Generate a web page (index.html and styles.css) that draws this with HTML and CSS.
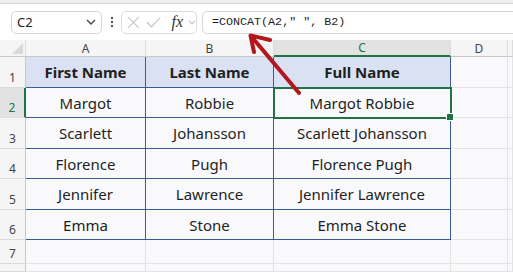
FILE: index.html
```html
<!DOCTYPE html>
<html lang="en">
<head>
  <meta charset="UTF-8">
  <title>CONCAT example</title>
  <link rel="stylesheet" href="styles.css">
</head>
<body>
  <div class="ribbon-edge"></div>

  <div class="formula-bar">
    <div class="name-box">
      <span>C2</span>
      <svg width="10" height="6" viewBox="0 0 10 6"><path d="M1 1 L5 5 L9 1" class="chev" /></svg>
    </div>
    <svg class="dots" width="4" height="12" viewBox="0 0 4 12">
      <circle cx="2" cy="2" r="1.2" /><circle cx="2" cy="6" r="1.2" /><circle cx="2" cy="10" r="1.2" />
    </svg>
    <div class="fx-box">
      <svg width="13" height="13" viewBox="0 0 13 13"><path d="M1 1 L12 12 M12 1 L1 12" class="thin" /></svg>
      <svg width="15" height="11" viewBox="0 0 15 11"><path d="M1 5 L5.5 10 L14 1" class="thin" /></svg>
      <span class="fx">fx</span>
      <svg width="8" height="5" viewBox="0 0 8 5"><path d="M1 1 L4 4 L7 1" class="thin" /></svg>
    </div>
    <div class="formula">=CONCAT(A2," ", B2)</div>
  </div>

  <div class="sheet">
    <!-- column headers -->
    <div class="corner"><svg width="11" height="11" viewBox="0 0 11 11"><path d="M11 0 L11 11 L0 11 Z" fill="#d9d9d9" /></svg></div>
    <div class="col-head">A</div>
    <div class="col-head">B</div>
    <div class="col-head active">C</div>
    <div class="col-head">D</div>
    <div class="col-head"></div>

    <!-- row 1 -->
    <div class="row-head">1</div>
    <div class="cell t th first">First Name</div>
    <div class="cell t th">Last Name</div>
    <div class="cell t th">Full Name</div>
    <div class="cell"></div>
    <div class="cell"></div>

    <div class="row-head active">2</div>
    <div class="cell t first">Margot</div>
    <div class="cell t">Robbie</div>
    <div class="cell t sel">Margot Robbie</div>
    <div class="cell"></div>
    <div class="cell"></div>

    <div class="row-head">3</div>
    <div class="cell t first">Scarlett</div>
    <div class="cell t">Johansson</div>
    <div class="cell t">Scarlett Johansson</div>
    <div class="cell"></div>
    <div class="cell"></div>

    <div class="row-head">4</div>
    <div class="cell t first">Florence</div>
    <div class="cell t">Pugh</div>
    <div class="cell t">Florence Pugh</div>
    <div class="cell"></div>
    <div class="cell"></div>

    <div class="row-head">5</div>
    <div class="cell t first">Jennifer</div>
    <div class="cell t">Lawrence</div>
    <div class="cell t">Jennifer Lawrence</div>
    <div class="cell"></div>
    <div class="cell"></div>

    <div class="row-head">6</div>
    <div class="cell t first">Emma</div>
    <div class="cell t">Stone</div>
    <div class="cell t">Emma Stone</div>
    <div class="cell"></div>
    <div class="cell"></div>

    <div class="row-head">7</div>
    <div class="cell"></div>
    <div class="cell"></div>
    <div class="cell"></div>
    <div class="cell"></div>
    <div class="cell"></div>

    <div class="row-head"></div>
    <div class="cell"></div>
    <div class="cell"></div>
    <div class="cell"></div>
    <div class="cell"></div>
    <div class="cell"></div>
  </div>

  <!-- callout arrow pointing at the formula -->
  <svg class="arrow" width="513" height="272" viewBox="0 0 513 272">
    <path d="M299 93 L251 36 M270 40 L250.5 35.5 L254 52" />
  </svg>
</body>
</html>
```

FILE: styles.css
```css
* {
  box-sizing: border-box;
}

body {
  margin: 0;
  width: 513px;
  height: 272px;
  overflow: hidden;
  position: relative;
  background: #fff;
  font-family: "Noto Sans", Arial, sans-serif;
  color: #222;
}

.ribbon-edge {
  height: 4px;
  background: #efefef;
  border-bottom: 1px solid #d4d4d4;
}

.formula-bar {
  height: 36px;
  display: flex;
  align-items: center;
  padding-left: 11px;
  overflow: hidden;
}

.formula-bar > * {
  flex: none;
}

.name-box {
  width: 91px;
  height: 23px;
  border: 1px solid #d6d6d6;
  border-radius: 5px;
  display: flex;
  align-items: center;
  justify-content: space-between;
  padding: 0 5px 0 5px;
  font-size: 13px;
  color: #222;
}

.chev {
  fill: none;
  stroke: #444;
  stroke-width: 1.3;
}

.dots {
  margin-left: 8px;
  fill: #555;
}

.fx-box {
  margin-left: 7px;
  width: 76px;
  height: 23px;
  border: 1px solid #dcdcdc;
  border-radius: 5px;
  display: flex;
  align-items: center;
  gap: 6px;
  padding-left: 5px;
}

.thin {
  fill: none;
  stroke: #c4c4c4;
  stroke-width: 1.2;
}

.fx {
  font-family: "Liberation Serif", serif;
  font-style: italic;
  font-size: 16px;
  color: #333;
  margin-left: 5px;
  margin-right: -1px;
}

.formula {
  margin-left: 5px;
  width: 330px;
  height: 23px;
  border: 1px solid #d6d6d6;
  border-radius: 5px;
  padding-left: 9px;
  display: flex;
  align-items: center;
  font-family: "Liberation Mono", monospace;
  font-size: 11.7px;
  color: #1e1e1e;
}

.sheet {
  display: grid;
  grid-template-columns: 26px 120px 128px 177px 57px 5px;
  grid-template-rows: 17px 31px 30px 31px 30px 31px 30px 24px 8px;
  background: #f9f9fb;
}

.corner {
  background: #f5f5f5;
  border-right: 1px solid #dcdcdc;
  border-bottom: 1px solid #c8c8c8;
  display: flex;
  align-items: flex-end;
  justify-content: flex-end;
  padding: 0 2px 2px 0;
}

.col-head {
  background: #f5f5f5;
  border-right: 1px solid #dcdcdc;
  border-bottom: 1px solid #c8c8c8;
  font-size: 12px;
  color: #444;
  display: flex;
  align-items: center;
  justify-content: center;
}

.col-head.active {
  background: #e2e2e2;
  border-bottom: 2px solid #217346;
  color: #217346;
}

.row-head {
  background: #f5f5f5;
  border-right: 1px solid #c8c8c8;
  border-bottom: 1px solid #dcdcdc;
  font-size: 12px;
  color: #444;
  display: flex;
  align-items: flex-end;
  justify-content: center;
  padding-bottom: 1px;
}

.row-head.active {
  background: #e2e2e2;
  border-right: 2px solid #217346;
  color: #217346;
}

.cell {
  border-right: 1px solid #e3e3e3;
  border-bottom: 1px solid #e3e3e3;
  display: flex;
  align-items: center;
  justify-content: center;
  font-size: 15px;
  color: #1f1f1f;
}

.cell.t {
  border-color: #3b5a9c;
}

.cell.th {
  background: #d9e1f2;
  font-weight: bold;
}

.cell.sel {
  position: relative;
  outline: 2px solid #217346;
  outline-offset: -1px;
}

.cell.sel::after {
  content: "";
  position: absolute;
  right: -4px;
  bottom: -4px;
  width: 6px;
  height: 6px;
  background: #217346;
  border: 1px solid #fff;
}

.arrow {
  position: absolute;
  top: 0;
  left: 0;
  pointer-events: none;
}

.arrow path {
  fill: none;
  stroke: #b3161d;
  stroke-width: 4;
  stroke-linecap: round;
  stroke-linejoin: round;
}
```
